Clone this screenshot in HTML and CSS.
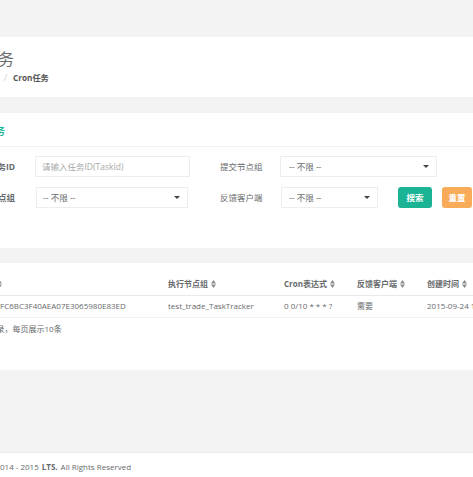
FILE: index.html
```html
<!DOCTYPE html>
<html lang="zh-CN">
<head>
<meta charset="utf-8">
<title>Cron任务</title>
<link rel="stylesheet" href="styles.css">
</head>
<body>
<div class="top-gap"></div>
<header class="page-heading">
  <h2 class="title"><span class="lead lead-title">Cron任务</span></h2>
  <ol class="crumbs">
    <li class="lead lead-crumb">任务管理<span class="sep">/</span></li>
    <li class="active">Cron任务</li>
  </ol>
</header>

<section class="ibox search">
  <div class="ibox-title"><h5 class="lead lead-h5">Cron任务</h5></div>
  <form class="ibox-content form">
    <div class="row row1">
      <label class="lead lead-label">任务ID</label>
      <input class="ctl ctl-id" type="text" placeholder="请输入任务ID(TaskId)">
      <label class="label2">提交节点组</label>
      <div class="ctl sel sel-submit"><span>-- 不限 --</span><i class="caret"></i></div>
    </div>
    <div class="row row2">
      <label class="lead lead-label">执行节点组</label>
      <div class="ctl sel sel-exec"><span>-- 不限 --</span><i class="caret"></i></div>
      <label class="label2 label2b">反馈客户端</label>
      <div class="ctl sel sel-feedback"><span>-- 不限 --</span><i class="caret"></i></div>
      <button class="btn btn-search" type="button">搜索</button>
      <button class="btn btn-reset" type="button">重置</button>
    </div>
  </form>
</section>

<section class="ibox list">
  <table class="grid">
    <colgroup>
      <col class="c1"><col class="c2"><col class="c3"><col class="c4"><col class="c5">
    </colgroup>
    <thead>
      <tr>
        <th>任务ID<svg class="sort" viewBox="0 0 5 8"><path d="M0 3.4L2.5 0 5 3.4Z M0 4.6L5 4.6 2.5 8Z"/></svg></th>
        <th>执行节点组<svg class="sort" viewBox="0 0 5 8"><path d="M0 3.4L2.5 0 5 3.4Z M0 4.6L5 4.6 2.5 8Z"/></svg></th>
        <th>Cron表达式<svg class="sort" viewBox="0 0 5 8"><path d="M0 3.4L2.5 0 5 3.4Z M0 4.6L5 4.6 2.5 8Z"/></svg></th>
        <th>反馈客户端<svg class="sort" viewBox="0 0 5 8"><path d="M0 3.4L2.5 0 5 3.4Z M0 4.6L5 4.6 2.5 8Z"/></svg></th>
        <th>创建时间<svg class="sort" viewBox="0 0 5 8"><path d="M0 3.4L2.5 0 5 3.4Z M0 4.6L5 4.6 2.5 8Z"/></svg></th>
      </tr>
    </thead>
    <tbody>
      <tr>
        <td><div class="id-cell"><span class="lead lead-id">9B2E1</span>FC6BC3F40AEA07E3065980E83ED</div></td>
        <td>test_trade_TaskTracker</td>
        <td>0 0/10 * * * ?</td>
        <td>需要</td>
        <td>2015-09-24 16:20:13</td>
      </tr>
    </tbody>
  </table>
  <p class="info"><span class="lead lead-info">共1条记录</span>，每页展示10条</p>
</section>

<footer class="footer">
  <p class="copy"><span class="lead lead-copy">Copyright © 2</span>014 - 2015 <strong>LTS.</strong> All Rights Reserved</p>
</footer>
</body>
</html>
```

FILE: styles.css
```css
* { box-sizing: border-box; margin: 0; padding: 0; }
html, body { width: 473px; height: 477px; overflow: hidden; }
body {
  background: #f3f3f4;
  font-family: "Open Sans", "Noto Sans CJK SC", sans-serif;
  color: #676a6c;
  font-size: 8.5px;
  line-height: 12px;
}
.lead {
  display: flex;
  justify-content: flex-end;
  white-space: nowrap;
  flex: none;
}
.top-gap { height: 37px; }

.page-heading {
  background: #fff;
  height: 60px;
  padding-top: 12px;
}
.title { display: flex; font-size: 16px; font-weight: 400; line-height: 20px; color: #676a6c; }
.lead-title { width: 14px; }
.crumbs { display: flex; list-style: none; margin-top: 3px; }
.lead-crumb { width: 13px; }
.sep { color: #ccc; padding: 0 6px 0 4px; }
.crumbs .active { font-weight: 700; color: #555; font-size: 8.2px; }

.ibox { background: #fff; }
.search { margin-top: 16px; height: 135px; }
.ibox-title { height: 34px; padding-top: 12px; border-bottom: 1px solid #eef0f1; display: flex; }
.lead-h5 { width: 5px; font-size: 10px; font-weight: 700; color: #1ab394; }

.form { padding-top: 9px; }
.row { display: flex; align-items: center; height: 21px; }
.row2 { margin-top: 10px; }
.lead-label { width: 15px; font-weight: 700; color: #676a6c; }
.label2 { width: 42px; margin-left: 30px; color: #676a6c; white-space: nowrap; }
.label2b { margin-left: 32px; }

.ctl {
  height: 21px;
  border: 1px solid #eceded;
  background: #fff;
  font: inherit;
  color: #676a6c;
  padding: 0 6px;
  outline: none;
}
.ctl::placeholder { color: #a9a9a9; }
.ctl-id { width: 155px; margin-left: 20px; }
.sel { display: flex; align-items: center; justify-content: space-between; white-space: nowrap; }
.sel-submit { width: 157px; margin-left: 18px; padding-left: 8px; }
.sel-exec { width: 152px; margin-left: 21px; }
.sel-feedback { width: 97px; margin-left: 19px; padding-left: 7px; }
.caret {
  width: 0; height: 0;
  border-top: 3px solid #444;
  border-left: 3px solid transparent;
  border-right: 3px solid transparent;
  margin-right: 1px;
}
.btn {
  height: 21px;
  border: 0;
  border-radius: 3px;
  color: #fff;
  font: inherit;
  font-weight: 700;
  flex: none;
}
.btn-search { width: 34px; margin-left: 20px; background: #1ab394; }
.btn-reset { width: 30px; margin-left: 10px; background: #f8ac59; }

.list { margin-top: 15px; height: 107px; padding-top: 10px; font-size: 8px; }
.grid {
  table-layout: fixed;
  border-collapse: collapse;
  width: 578px;
  margin-left: -31px;
  white-space: nowrap;
}
.c1 { width: 199px; }
.c2 { width: 116px; }
.c3 { width: 73px; }
.c4 { width: 70px; }
.c5 { width: 120px; }
.grid th {
  height: 22px;
  text-align: left;
  font-weight: 700;
  color: #676a6c;
  border-bottom: 1px solid #e7eaec;
  vertical-align: middle;
}
.grid td {
  height: 22px;
  color: #676a6c;
  border-bottom: 1px solid #eef0f1;
  vertical-align: middle;
}
.id-cell { display: flex; }
.lead-id { width: 31px; }
.sort { width: 5px; height: 8px; margin-left: 3px; fill: #8a8c8e; vertical-align: -1px; }
.info { display: flex; margin-top: 5px; white-space: nowrap; }
.lead-info { width: 4.5px; }

.footer {
  margin-top: 82px;
  background: #fff;
  height: 25px;
  border-top: 1px solid #e7eaec;
  padding-top: 8px;
  font-size: 8px;
}
.copy { display: flex; white-space: nowrap; color: #676a6c; }
.copy strong { margin: 0 3px; }
.lead-copy { width: 0; }
```
